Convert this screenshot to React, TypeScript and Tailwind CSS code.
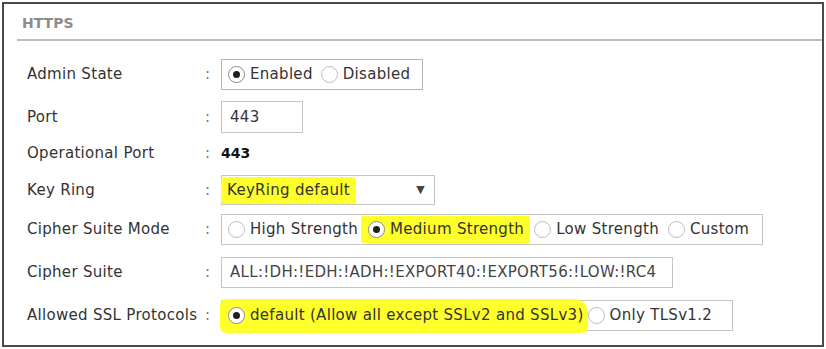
import React from "react";

const FONT = { fontFamily: '"DejaVu Sans", Verdana, sans-serif' };

function Radio({ checked }: { checked?: boolean }) {
  return (
    <span
      className={
        "inline-flex items-center justify-center w-[17px] h-[17px] rounded-full border bg-white shrink-0 " +
        (checked ? "border-[#8a8a8a]" : "border-[#bdbdbd]")
      }
    >
      {checked && <span className="w-[7px] h-[7px] rounded-full bg-[#1e1e1e]" />}
    </span>
  );
}

function Opt({ checked, label, hl, className = "" }: { checked?: boolean; label: string; hl?: boolean; className?: string }) {
  return (
    <span className={"inline-flex items-center gap-[5px] " + (hl ? "bg-[#ffff2a] " : "") + className}>
      <Radio checked={checked} />
      <span>{label}</span>
    </span>
  );
}

function Row({ label, children, className = "" }: { label: string; children: React.ReactNode; className?: string }) {
  return (
    <div className={"flex items-center " + className}>
      <div className="w-[178px] shrink-0 text-[#333]">{label}</div>
      <div className="w-[16px] shrink-0 text-[#777]">:</div>
      <div className="flex items-center">{children}</div>
    </div>
  );
}

export default function App() {
  return (
    <div className="w-[826px] h-[349px] bg-white overflow-hidden text-[15px] text-[#333] tracking-[0.3px]" style={FONT}>
      <div className="ml-[2px] mt-[2px] w-[822px] h-[345px] border-2 border-[#4a4a4a] flex flex-col">
        <div className="pl-[18px] pt-[10px] h-[35px] text-[14px] font-bold text-[#8c8c8c] leading-[18px] tracking-normal">HTTPS</div>
        <div className="ml-[13px] h-[2px] bg-[#bcbcbc]" />
        <div className="pl-[23px] pt-[18px] flex flex-col">
          <Row label="Admin State" className="h-[31px]">
            <div className="h-[31px] w-[202px] border border-[#b5b5b5] flex items-center pl-[6px] gap-[8px]">
              <Opt checked label="Enabled" />
              <Opt label="Disabled" />
            </div>
          </Row>
          <Row label="Port" className="h-[32px] mt-[11px]">
            <div className="h-[32px] w-[82px] border border-[#c4c4c4] flex items-center pl-[8px]">443</div>
          </Row>
          <Row label="Operational Port" className="h-[20px] mt-[10px]">
            <span className="font-bold text-[14px] text-[#111] tracking-normal">443</span>
          </Row>
          <Row label="Key Ring" className="h-[30px] mt-[12px]">
            <div className="h-[30px] w-[214px] border border-[#c4c4c4] flex items-center justify-between pr-[9px]">
              <span className="h-[27px] flex items-center bg-[#ffff2a] pl-[6px] pr-[6px] -ml-[1px] rounded-[3px]">KeyRing default</span>
              <span className="text-[11px] text-[#444]">▼</span>
            </div>
          </Row>
          <Row label="Cipher Suite Mode" className="h-[31px] mt-[9px]">
            <div className="h-[31px] w-[542px] border border-[#c4c4c4] flex items-center pl-[6px]">
              <Opt label="High Strength" />
              <Opt checked hl label="Medium Strength" className="ml-[3px] h-[27px] pl-[7px] pr-[6px] rounded-[2px]" />
              <Opt label="Low Strength" className="ml-[4px]" />
              <Opt label="Custom" className="ml-[9px]" />
            </div>
          </Row>
          <Row label="Cipher Suite" className="h-[31px] mt-[12px]">
            <div className="h-[31px] w-[452px] border border-[#c4c4c4] flex items-center pl-[8px] overflow-hidden whitespace-nowrap text-[#444]">
              ALL:!DH:!EDH:!ADH:!EXPORT40:!EXPORT56:!LOW:!RC4
            </div>
          </Row>
          <Row label="Allowed SSL Protocols" className="h-[31px] mt-[12px]">
            <div className="h-[31px] w-[512px] border border-[#c4c4c4] flex items-center">
              <Opt checked hl label="default (Allow all except SSLv2 and SSLv3)" className="h-[34px] -my-[2px] -ml-[2px] pl-[8px] pr-[4px] rounded-[6px] rounded-tr-[14px]" />
              <Opt label="Only TLSv1.2" className="ml-[0px]" />
            </div>
          </Row>
        </div>
      </div>
    </div>
  );
}
